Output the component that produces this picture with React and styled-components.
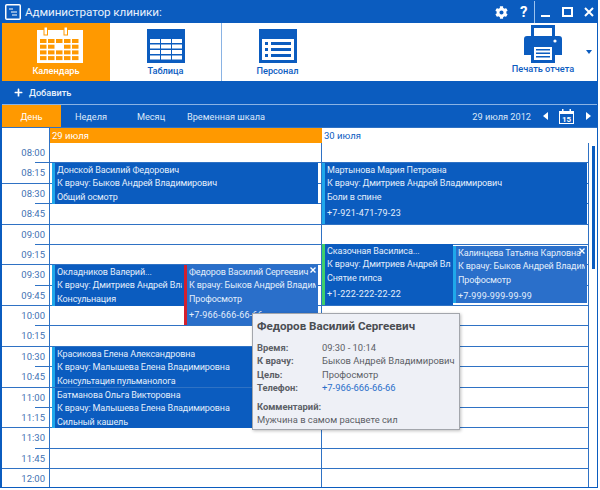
import React from 'react';
import styled, { createGlobalStyle } from 'styled-components';
import { FaCog, FaPlus } from 'react-icons/fa';

const BLUE = '#0b5cbf';
const ORANGE = '#ff9900';
const LINE = '#2f72c4';
const ROW = 20.375;

const GlobalStyle = createGlobalStyle`
  html, body { margin: 0; padding: 0; background: #fff; }
  * { box-sizing: border-box; }
  body { font-family: Roboto, "Noto Sans", sans-serif; }
`;

const Window = styled.div`
  width: 598px;
  height: 488px;
  display: flex;
  flex-direction: column;
  background: #fff;
  border: 1px solid ${BLUE};
  border-left-width: 2px;
  overflow: hidden;
`;

const TitleBar = styled.header`
  height: 22px;
  flex: none;
  display: flex;
  align-items: center;
  background: ${BLUE};
  color: #fff;
  padding-left: 3px;
`;

const AppTitle = styled.span`
  margin-left: 4px;
  font-size: 11.7px;
  letter-spacing: -0.1px;
  color: #e8f1fc;
`;

const TitleTools = styled.div`
  margin-left: auto;
  display: flex;
  align-items: center;
  height: 100%;
`;

const HelpMark = styled.span`
  font-size: 15px;
  font-weight: 700;
  margin: 0 6px 0 12px;
  width: 8px;
`;

const WinButtons = styled.div`
  height: 100%;
  display: flex;
  align-items: center;
  gap: 11px;
  padding: 0 3px 0 6px;
  border-left: 1px solid #9cc2ee;
`;

const Ribbon = styled.nav`
  height: 58px;
  flex: none;
  display: flex;
  background: #fff;
`;

const RibbonItem = styled.div`
  width: ${p => p.$width}px;
  display: flex;
  flex-direction: column;
  align-items: center;
  justify-content: flex-end;
  padding-bottom: 5px;
  gap: ${p => p.$gap ?? 2}px;
  background: ${p => (p.$active ? ORANGE : '#fff')};
  color: ${p => (p.$active ? '#fff' : BLUE)};
  border-right: ${p => (p.$divider ? '1px solid #8ab3e4' : 'none')};
  font-size: 9.2px;
  line-height: 11px;
  font-weight: 500;
`;

const PrintArea = styled.div`
  margin-left: auto;
  display: flex;
  align-items: center;
`;

const DropArrow = styled.span`
  width: 0;
  height: 0;
  margin: 0 5px 0 3px;
  border-left: 3px solid transparent;
  border-right: 3px solid transparent;
  border-top: 4px solid ${BLUE};
`;

const Toolbar = styled.div`
  height: 24px;
  flex: none;
  display: flex;
  align-items: center;
  gap: 6px;
  padding-left: 12px;
  background: ${BLUE};
  color: #e8f1fc;
  font-size: 9.2px;
  font-weight: 500;
  border-bottom: 1px solid #8ab3e4;
`;

const ViewBar = styled.div`
  height: 22px;
  flex: none;
  display: flex;
  align-items: center;
  background: ${BLUE};
  color: #dbe8f9;
  font-size: 9.2px;
`;

const ViewTab = styled.span`
  height: 100%;
  display: flex;
  align-items: center;
  justify-content: center;
  width: ${p => p.$width}px;
  background: ${p => (p.$active ? ORANGE : 'transparent')};
  color: ${p => (p.$active ? '#fff' : 'inherit')};
`;

const DateNav = styled.div`
  margin-left: auto;
  display: flex;
  align-items: center;
  padding-right: 6px;
`;

const NavArrow = styled.span`
  width: 0;
  height: 0;
  border-top: 4px solid transparent;
  border-bottom: 4px solid transparent;
  border-left: ${p => (p.$right ? '5px solid #fff' : 'none')};
  border-right: ${p => (p.$right ? 'none' : '5px solid #fff')};
  margin: ${p => p.$margin};
`;

const DateHeader = styled.div`
  height: 16px;
  flex: none;
  display: grid;
  grid-template-columns: 48px 272px 1fr;
  font-size: 9.5px;
  border-top: 1px solid ${LINE};
  border-bottom: 1px solid ${LINE};
  line-height: 15px;
`;

const DayHead = styled.div`
  padding-left: 2px;
  background: ${p => (p.$active ? ORANGE : '#fff')};
  color: ${p => (p.$active ? '#fff' : BLUE)};
  border-right: 1px solid ${p => (p.$active ? ORANGE : LINE)};
  &:first-child { background: #fff; border-right: 1px solid ${LINE}; }
  &:last-child { border-right: none; }
`;

const Schedule = styled.div`
  flex: 1;
  min-height: 0;
  display: grid;
  grid-template-columns: 48px 272px 267px 1fr;
`;

const TimeColumn = styled.div`
  display: grid;
  grid-template-rows: repeat(17, ${ROW}px);
  border-right: 1px solid ${LINE};
`;

const TimeCell = styled.div`
  position: relative;
  font-size: 9.5px;
  line-height: 19px;
  text-align: right;
  padding-right: 4px;
  color: #3f72b3;
  ${p => (p.$major ? `border-bottom: 1px solid ${LINE};` : '')}
  ${p => (p.$major ? '' : `
    &::after {
      content: '';
      position: absolute;
      right: 0;
      bottom: 0;
      width: 14px;
      height: 1px;
      background: ${LINE};
    }
  `)}
`;

const DayColumn = styled.div`
  position: relative;
  display: grid;
  grid-template-rows: repeat(17, ${ROW}px);
  border-right: 1px solid ${LINE};
`;

const SlotLine = styled.div`
  border-bottom: 1px solid ${LINE};
`;

const ScrollTrack = styled.div`
  padding: 3px 1px 0 3px;
`;

const ScrollThumb = styled.div`
  width: 3px;
  height: 123px;
  background: ${BLUE};
`;

const Event = styled.div`
  position: absolute;
  left: ${p => p.$left}px;
  top: ${p => p.$top}px;
  width: ${p => p.$width}px;
  height: ${p => p.$height}px;
  background: ${p => (p.$selected ? '#2a6fca' : BLUE)};
  border-left: 3px solid ${p => p.$accent};
  color: #e3eefb;
  font-size: 9px;
  letter-spacing: -0.12px;
  line-height: 13.4px;
  padding: 1px 0 0 2px;
  overflow: hidden;
  white-space: nowrap;
`;

const EventLine = styled.div`
  overflow: hidden;
  margin-right: 2px;
`;

const EventPhone = styled.div`
  margin-top: 3px;
  letter-spacing: 0.2px;
`;

const CloseMark = styled.svg`
  position: absolute;
  top: 2px;
  right: 2px;
  width: 6px;
  height: 6px;
`;

const Tooltip = styled.div`
  position: absolute;
  left: 252px;
  top: 313px;
  width: 208px;
  height: 117px;
  padding: 5px 4px;
  background: #eef0f6;
  border: 1px solid #a3a6ac;
  box-shadow: 1px 1px 3px rgba(0, 0, 0, 0.25);
  color: #5c5f66;
  font-size: 9.4px;
  z-index: 3;
`;

const TipTitle = styled.div`
  font-size: 11.6px;
  font-weight: 700;
  color: #4a4d52;
  margin-bottom: 7px;
  line-height: 15px;
`;

const TipRow = styled.div`
  display: grid;
  grid-template-columns: 65px 1fr;
  line-height: 13.3px;
  white-space: nowrap;
`;

const TipLabel = styled.span`
  font-weight: 700;
`;

const TipPhone = styled.span`
  color: #2a6fca;
`;

const TipComment = styled.div`
  margin-top: 6px;
  line-height: 13.3px;
`;

const CalendarIcon = () => (
  <svg width="54" height="36" viewBox="0 0 54 36" fill="#fff">
    <rect x="8" y="3" width="46" height="33" />
    <rect x="15" y="0" width="3.5" height="8" stroke={ORANGE} strokeWidth="1" />
    <rect x="35" y="0" width="3.5" height="8" stroke={ORANGE} strokeWidth="1" />
    {[0, 1, 2, 3].map(r =>
      [0, 1, 2, 3, 4].map(c =>
        r === 1 && c === 2 ? null : (
          <rect key={`${r}-${c}`} x={11 + c * 8} y={12 + r * 5.7} width="6.5" height="4" fill={ORANGE} />
        )
      )
    )}
  </svg>
);

const TableIcon = () => (
  <svg width="38" height="34" viewBox="0 0 38 34">
    <rect width="38" height="34" fill={BLUE} />
    {[0, 1, 2, 3].map(r =>
      [0, 1, 2].map(c => (
        <rect key={`${r}-${c}`} x={3 + c * 11} y={10 + r * 5.5} width="10" height="4" fill="#fff" />
      ))
    )}
  </svg>
);

const ListIcon = () => (
  <svg width="38" height="34" viewBox="0 0 38 34">
    <rect width="38" height="34" fill={BLUE} />
    <rect x="3" y="10" width="32" height="21" fill="#fff" />
    {[0, 1, 2].map(r => (
      <g key={r} fill={BLUE}>
        <rect x="6" y={13 + r * 6} width="3" height="3" />
        <rect x="12" y={13 + r * 6} width="20" height="3" />
      </g>
    ))}
  </svg>
);

const PrinterIcon = () => (
  <svg width="38" height="38" viewBox="0 0 38 38">
    <rect x="7" y="0" width="24" height="13" fill={BLUE} />
    <rect x="10" y="3" width="18" height="8" fill="#fff" />
    <path d="M3 11h32a3 3 0 0 1 3 3v16h-7v-9H7v9H0V14a3 3 0 0 1 3-3z" fill={BLUE} />
    <circle cx="31" cy="16" r="1.6" fill="#fff" />
    <rect x="7" y="19" width="24" height="19" fill={BLUE} />
    <rect x="10" y="22" width="18" height="13" fill="#fff" />
    <rect x="12" y="24" width="14" height="1.5" fill={BLUE} />
    <rect x="12" y="27.5" width="14" height="1.5" fill={BLUE} />
    <rect x="12" y="31" width="14" height="1.5" fill={BLUE} />
  </svg>
);

const AppIcon = () => (
  <svg width="16" height="16" viewBox="0 0 16 16" fill="none" stroke="#fff">
    <rect x="0.75" y="0.75" width="14.5" height="14.5" rx="1" strokeWidth="1.5" />
    <path d="M4 5h4M6 8h6M7 11h5" strokeWidth="1.2" />
  </svg>
);

const MinimizeIcon = () => (
  <svg width="10" height="10" viewBox="0 0 10 10"><rect y="8" width="9" height="2" fill="#fff" /></svg>
);

const MaximizeIcon = () => (
  <svg width="11" height="10" viewBox="0 0 11 10" fill="none">
    <rect x="1" y="1" width="9" height="8" stroke="#fff" strokeWidth="2" />
  </svg>
);

const CloseIcon = () => (
  <svg width="10" height="10" viewBox="0 0 10 10"><path d="M1 1l8 8M9 1l-8 8" stroke="#fff" strokeWidth="2" /></svg>
);

const SmallCalendarIcon = () => (
  <svg width="15" height="15" viewBox="0 0 15 15">
    <rect x="0.5" y="2.5" width="14" height="12" fill="none" stroke="#fff" />
    <rect x="0.5" y="2" width="14" height="3" fill="#fff" />
    <rect x="3" y="0" width="1.5" height="3" fill="#fff" />
    <rect x="10.5" y="0" width="1.5" height="3" fill="#fff" />
    <text x="7.5" y="13" fontSize="8" fontWeight="700" textAnchor="middle" fill="#fff">15</text>
  </svg>
);

const TIMES = [
  '08:00', '08:15', '08:30', '08:45', '09:00', '09:15', '09:30', '09:45', '10:00',
  '10:15', '10:30', '10:45', '11:00', '11:15', '11:30', '11:45', '12:00',
];

const DAY_ONE = [
  { left: 2, top: 20, width: 266, height: 41, accent: '#1fa8ea', lines: ['Донской Василий Федорович', 'К врачу: Быков Андрей Владимирович', 'Общий осмотр'] },
  { left: 2, top: 122, width: 132, height: 41, accent: '#1fa8ea', lines: ['Окладников Валерий...', 'К врачу: Дмитриев Андрей Владимирович', 'Консульнация'] },
  { left: 134, top: 122, width: 134, height: 60, accent: '#d3202e', selected: true, closable: true, lines: ['Федоров Василий Сергеевич', 'К врачу: Быков Андрей Владимирович', 'Профосмотр'], phone: '+7-966-666-66-66' },
  { left: 2, top: 204, width: 266, height: 40, accent: '#1fa8ea', lines: ['Красикова Елена Александровна', 'К врачу: Малышева Елена Владимировна', 'Консультация пульманолога'] },
  { left: 2, top: 245, width: 266, height: 40, accent: '#1fa8ea', lines: ['Батманова Ольга Викторовна', 'К врачу: Малышева Елена Владимировна', 'Сильный кашель'] },
];

const DAY_TWO = [
  { left: 0, top: 20, width: 265, height: 61, accent: '#1fa8ea', lines: ['Мартынова Мария Петровна', 'К врачу: Дмитриев Андрей Владимирович', 'Боли в спине'], phone: '+7-921-471-79-23' },
  { left: 0, top: 101, width: 131, height: 61, accent: '#3ecf6c', lines: ['Сказочная Василиса...', 'К врачу: Дмитриев Андрей Владимирович', 'Снятие гипса'], phone: '+1-222-222-22-22' },
  { left: 131, top: 103, width: 134, height: 57, accent: '#1fa8ea', selected: true, closable: true, lines: ['Калинцева Татьяна Карловна', 'К врачу: Быков Андрей Владимирович', 'Профосмотр'], phone: '+7-999-999-99-99' },
];

const renderEvent = e => (
  <Event
    key={e.lines[0]}
    $left={e.left}
    $top={e.top}
    $width={e.width}
    $height={e.height}
    $accent={e.accent}
    $selected={e.selected}
  >
    {e.lines.map(l => <EventLine key={l}>{l}</EventLine>)}
    {e.phone && <EventPhone>{e.phone}</EventPhone>}
    {e.closable && (
      <CloseMark viewBox="0 0 6 6">
        <path d="M0.5 0.5l5 5M5.5 0.5l-5 5" stroke="#fff" strokeWidth="1.4" />
      </CloseMark>
    )}
  </Event>
);

const Slots = () => TIMES.map(t => <SlotLine key={t} />);

const App = () => (
  <>
    <GlobalStyle />
    <Window>
      <TitleBar>
        <AppIcon />
        <AppTitle>Администратор клиники:</AppTitle>
        <TitleTools>
          <FaCog size={13} color="#fff" />
          <HelpMark>?</HelpMark>
          <WinButtons>
            <MinimizeIcon />
            <MaximizeIcon />
            <CloseIcon />
          </WinButtons>
        </TitleTools>
      </TitleBar>

      <Ribbon>
        <RibbonItem $width={108} $active>
          <CalendarIcon />
          Календарь
        </RibbonItem>
        <RibbonItem $width={112} $divider>
          <TableIcon />
          Таблица
        </RibbonItem>
        <RibbonItem $width={111}>
          <ListIcon />
          Персонал
        </RibbonItem>
        <PrintArea>
          <RibbonItem $width={80} $gap={0}>
            <PrinterIcon />
            Печать отчета
          </RibbonItem>
          <DropArrow />
        </PrintArea>
      </Ribbon>

      <Toolbar>
        <FaPlus size={9} color="#fff" />
        Добавить
      </Toolbar>

      <ViewBar>
        <ViewTab $width={59} $active>День</ViewTab>
        <ViewTab $width={60}>Неделя</ViewTab>
        <ViewTab $width={60}>Месяц</ViewTab>
        <ViewTab $width={90}>Временная шкала</ViewTab>
        <DateNav>
          29 июля 2012
          <NavArrow $margin="0 11px 0 12px" />
          <SmallCalendarIcon />
          <NavArrow $right $margin="0 0 0 12px" />
        </DateNav>
      </ViewBar>

      <DateHeader>
        <DayHead />
        <DayHead $active>29 июля</DayHead>
        <DayHead>30 июля</DayHead>
      </DateHeader>

      <Schedule>
        <TimeColumn>
          {TIMES.map((t, i) => <TimeCell key={t} $major={i % 2 === 1}>{t}</TimeCell>)}
        </TimeColumn>
        <DayColumn>
          <Slots />
          {DAY_ONE.map(renderEvent)}
        </DayColumn>
        <DayColumn>
          <Slots />
          {DAY_TWO.map(renderEvent)}
        </DayColumn>
        <ScrollTrack>
          <ScrollThumb />
        </ScrollTrack>
      </Schedule>

      <Tooltip>
        <TipTitle>Федоров Василий Сергеевич</TipTitle>
        <TipRow><TipLabel>Время:</TipLabel><span>09:30 - 10:14</span></TipRow>
        <TipRow><TipLabel>К врачу:</TipLabel><span>Быков Андрей Владимирович</span></TipRow>
        <TipRow><TipLabel>Цель:</TipLabel><span>Профосмотр</span></TipRow>
        <TipRow><TipLabel>Телефон:</TipLabel><TipPhone>+7-966-666-66-66</TipPhone></TipRow>
        <TipComment>
          <TipLabel>Комментарий:</TipLabel>
          <div>Мужчина в самом расцвете сил</div>
        </TipComment>
      </Tooltip>
    </Window>
  </>
);

export default App;
